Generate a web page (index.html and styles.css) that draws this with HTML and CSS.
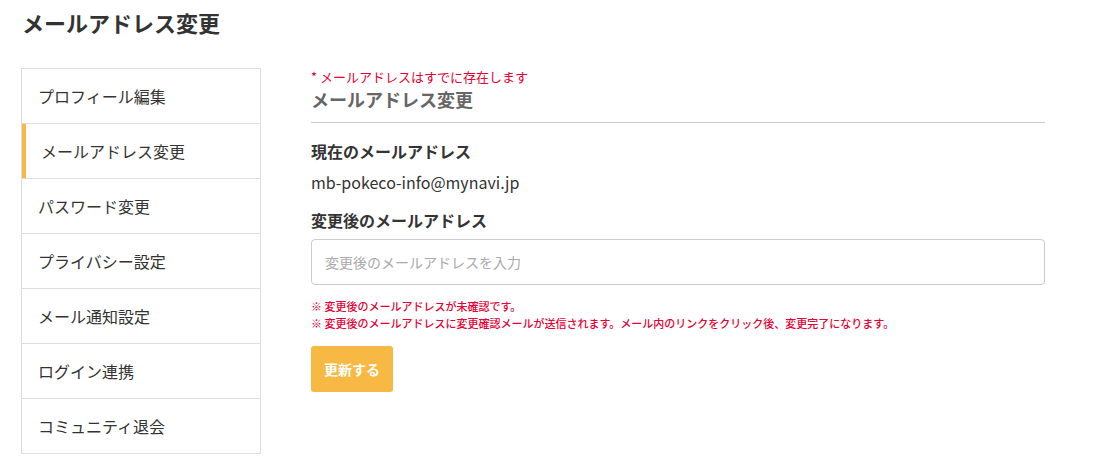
FILE: index.html
```html
<!DOCTYPE html>
<html lang="ja">
<head>
    <meta charset="UTF-8">
    <meta name="viewport" content="width=device-width, initial-scale=1.0">
    <title>メールアドレス変更</title>
    <link rel="stylesheet" href="styles.css">
</head>
<body>

    <h1 class="page-title">メールアドレス変更</h1>

    <div class="layout">
        <nav class="side-menu">
            <ul>
                <li><a href="#">プロフィール編集</a></li>
                <li class="active"><a href="#">メールアドレス変更</a></li>
                <li><a href="#">パスワード変更</a></li>
                <li><a href="#">プライバシー設定</a></li>
                <li><a href="#">メール通知設定</a></li>
                <li><a href="#">ログイン連携</a></li>
                <li><a href="#">コミュニティ退会</a></li>
            </ul>
        </nav>

        <main class="content">
            <p class="error">* メールアドレスはすでに存在します</p>
            <h2 class="section-title">メールアドレス変更</h2>

            <form class="email-form">
                <label class="field-label">現在のメールアドレス</label>
                <p class="current-email">mb-pokeco-info@mynavi.jp</p>

                <label class="field-label" for="newEmail">変更後のメールアドレス</label>
                <input type="email" id="newEmail" class="text-input" placeholder="変更後のメールアドレスを入力">

                <div class="notes">
                    <p>※ 変更後のメールアドレスが未確認です。</p>
                    <p>※ 変更後のメールアドレスに変更確認メールが送信されます。メール内のリンクをクリック後、変更完了になります。</p>
                </div>

                <button type="submit" class="submit-btn">更新する</button>
            </form>
        </main>
    </div>

</body>
</html>
```

FILE: styles.css
```css
/* Basic Reset */
* {
    margin: 0;
    padding: 0;
    box-sizing: border-box;
}

body {
    font-family: "Noto Sans CJK JP", "Noto Sans", sans-serif;
    background-color: #fff;
    color: #333;
    padding: 0 21px;
}

.page-title {
    font-size: 22px;
    font-weight: bold;
    color: #333;
    line-height: 32px;
    padding-top: 6px;
    padding-left: 1px;
}

/* Layout */
.layout {
    display: flex;
    align-items: flex-start;
    gap: 50px;
    margin-top: 30px;
}

/* Side Menu */
.side-menu {
    width: 240px;
    flex-shrink: 0;
    border: 1px solid #ddd;
}

.side-menu ul {
    list-style: none;
}

.side-menu li {
    border-top: 1px solid #ddd;
}

.side-menu li:first-child {
    border-top: none;
}

.side-menu li a {
    display: block;
    height: 54px;
    line-height: 54px;
    padding-left: 16px;
    font-size: 16px;
    color: #333;
    text-decoration: none;
}

.side-menu li.active a {
    border-left: 4px solid #f7b943;
    padding-left: 15px;
}

/* Content */
.content {
    width: 734px;
}

.error {
    font-size: 13px;
    color: #e60033;
    line-height: 18px;
}

.section-title {
    font-size: 18px;
    font-weight: bold;
    color: #666;
    line-height: 26px;
    padding-bottom: 10px;
    border-bottom: 1px solid #ccc;
}

.email-form {
    padding-top: 16px;
}

.field-label {
    display: block;
    font-size: 16px;
    font-weight: bold;
    color: #333;
    line-height: 24px;
}

.current-email {
    font-size: 16px;
    line-height: 24px;
    margin-top: 7px;
    margin-bottom: 14px;
}

.text-input {
    display: block;
    width: 100%;
    height: 46px;
    margin-top: 7px;
    padding: 0 13px;
    font-family: inherit;
    font-size: 14px;
    color: #333;
    border: 1px solid #ccc;
    border-radius: 4px;
}

.text-input::placeholder {
    color: #aaa;
}

.notes {
    margin-top: 13px;
}

.notes p {
    font-size: 11px;
    font-weight: 500;
    color: #e60033;
    line-height: 17px;
}

.submit-btn {
    display: block;
    margin-top: 14px;
    width: 82px;
    height: 46px;
    font-family: inherit;
    font-size: 14px;
    font-weight: bold;
    color: #fff;
    background-color: #f7b943;
    border: none;
    border-radius: 3px;
    cursor: pointer;
}
```
